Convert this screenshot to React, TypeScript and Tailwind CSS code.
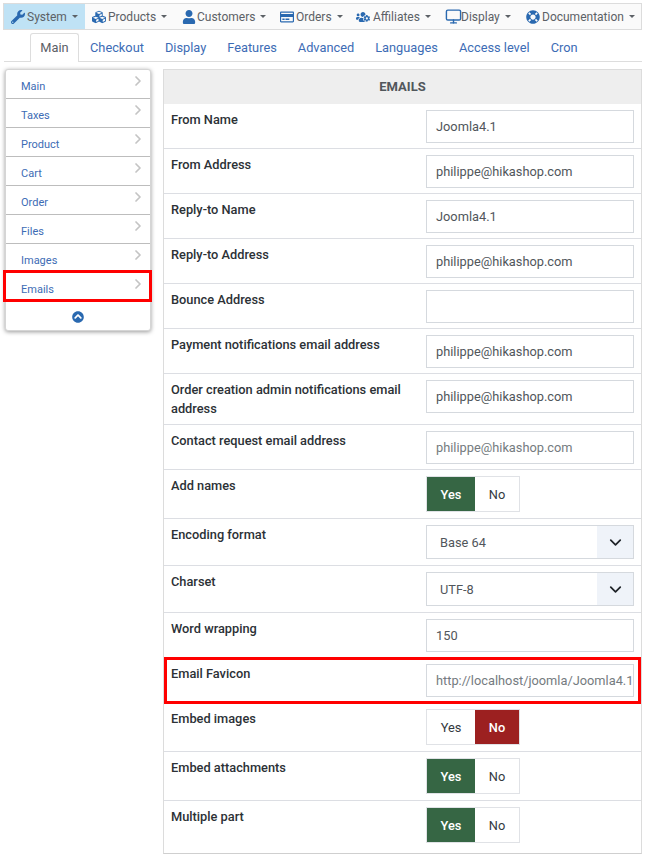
import React from 'react';
import { FaWrench, FaCubes, FaUser, FaRegCreditCard, FaUsersCog, FaLifeRing, FaChevronCircleUp } from 'react-icons/fa';
import { FiMonitor } from 'react-icons/fi';
import { LuChevronRight, LuChevronDown } from 'react-icons/lu';

const menu = [
  { label: 'System', icon: FaWrench, width: 'w-[81px]', active: true },
  { label: 'Products', icon: FaCubes, width: 'w-[90px]' },
  { label: 'Customers', icon: FaUser, width: 'w-[98px]', iconBox: 'w-[15px]' },
  { label: 'Orders', icon: FaRegCreditCard, width: 'w-[76px]' },
  { label: 'Affiliates', icon: FaUsersCog, width: 'w-[89px]', iconBox: 'w-[17px]' },
  { label: 'Display', icon: FiMonitor, width: 'w-[81px]' },
  { label: 'Documentation', icon: FaLifeRing, width: 'flex-1' },
];

const tabs = ['Main', 'Checkout', 'Display', 'Features', 'Advanced', 'Languages', 'Access level', 'Cron'];
const sideItems = ['Main', 'Taxes', 'Product', 'Cart', 'Order', 'Files', 'Images', 'Emails'];

const TextInput = ({ value, muted }: { value: string; muted?: boolean }) => (
  <div className={`h-[33px] w-[208px] border border-[#d5d9de] bg-white pl-[9px] flex items-center text-[12.8px] overflow-hidden whitespace-nowrap ${muted ? 'text-[#757b80]' : 'text-[#51565b]'}`}>
    {value}
  </div>
);

const SelectInput = ({ value }: { value: string }) => (
  <div className="h-[34px] w-[208px] border border-[#d5d9de] bg-white flex items-center text-[12.8px] text-[#51565b]">
    <span className="flex-1 pl-[13px] pt-[1px]">{value}</span>
    <span className="w-[36px] h-full bg-[#eff3f9] flex items-center justify-center text-[#1f2328]">
      <LuChevronDown size={19} strokeWidth={2.2} />
    </span>
  </div>
);

const YesNo = ({ on }: { on: boolean }) => (
  <div className="h-[36px] w-[94px] border border-[#e0e2e6] bg-white flex text-[12.8px]">
    <span className={`w-[48px] flex items-center justify-center pt-[1px] ${on ? 'bg-[#366644] text-white font-medium' : 'text-[#34393e]'}`}>Yes</span>
    <span className={`flex-1 flex items-center justify-center pt-[1px] ${on ? 'text-[#34393e]' : 'bg-[#9c2020] text-white font-medium'}`}>No</span>
  </div>
);

const Row = ({
  label,
  height,
  children,
  pad = 'pt-[6px]',
  labelPad = 'pt-[6px]',
  last,
}: {
  label: string;
  height: string;
  children: React.ReactNode;
  pad?: string;
  labelPad?: string;
  last?: boolean;
}) => (
  <div className={`flex ${height} ${last ? '' : 'border-b border-[#dcdee3]'}`}>
    <div className={`w-[262px] pl-[7px] pr-[10px] text-[12.8px] leading-[19px] font-medium text-[#2c3136] ${labelPad}`}>{label}</div>
    <div className={pad}>{children}</div>
  </div>
);

export default function App() {
  return (
    <div className="w-[645px] h-[858px] bg-white overflow-hidden font-['Roboto',sans-serif] pt-[3px]">
      {/* top menu */}
      <div className="mx-[3px] h-[27px] border border-[#dcdcdc] bg-[#fafafa] flex text-[12px] text-[#5c6166]">
        {menu.map(m => {
          const Icon = m.icon;
          return (
            <div key={m.label} className={`${m.width} flex items-center pl-[7px] whitespace-nowrap ${m.active ? 'bg-[#bfe2f5]' : ''}`}>
              <span className={`${m.iconBox ?? 'w-[16px]'} shrink-0 flex items-center`}>
                <Icon className="text-[#2a69b0] shrink-0" size={m.label === 'Display' ? 17 : 14} />
              </span>
              <span>{m.label}</span>
              <span className="ml-[5px] w-0 h-0 border-x-[3px] border-x-transparent border-t-[3px] border-t-[#5c6166]" />
            </div>
          );
        })}
      </div>

      {/* tabs */}
      <div className="mt-[3px] ml-[4px] mr-[3px] h-[29px] border-b border-[#dddddd] flex pl-[26px] text-[12.8px] text-[#3d6cb5]">
        {tabs.map((t, i) => (
          <div
            key={t}
            className={`h-[29px] flex items-center whitespace-nowrap ${i === 0 ? 'w-[49px] justify-center border border-b-0 border-[#dddddd] rounded-t-[3px] bg-white text-[#5b6066] mr-[11px]' : 'mr-[21px]'}`}
          >
            {t}
          </div>
        ))}
      </div>

      <div className="flex mt-[7px] items-start">
        {/* side nav */}
        <div className="ml-[5px] w-[146px] bg-white rounded-[3px] border border-[#d5d5d5] shadow-[0_1px_4px_rgba(0,0,0,0.4)] text-[11px] text-[#3d6cb5]">
          {sideItems.map(s => (
            <div key={s} className="relative h-[29px] border-b border-[#bdbdbd] pl-[15px] flex items-center pt-[7px]">
              {s}
              <LuChevronRight className="absolute right-[4px] top-[3px] text-[#c4c4c4]" size={16} strokeWidth={2.6} />
            </div>
          ))}
          <div className="h-[28px] flex items-center justify-center pt-[2px]">
            <FaChevronCircleUp className="text-[#2a69b0]" size={12} />
          </div>
        </div>

        {/* main panel */}
        <div className="ml-[12px] w-[479px] border border-[#dcdcdc] border-b-[#cfcfcf] relative">
          <div className="h-[34px] bg-[#eeeeee] flex items-center justify-center text-[13px] font-bold text-[#51565b]">EMAILS</div>
          <Row label="From Name" height="h-[45px]"><TextInput value="Joomla4.1" /></Row>
          <Row label="From Address" height="h-[45px]"><TextInput value="philippe@hikashop.com" /></Row>
          <Row label="Reply-to Name" height="h-[45px]"><TextInput value="Joomla4.1" /></Row>
          <Row label="Reply-to Address" height="h-[45px]"><TextInput value="philippe@hikashop.com" /></Row>
          <Row label="Bounce Address" height="h-[45px]"><TextInput value="" /></Row>
          <Row label="Payment notifications email address" height="h-[45px]"><TextInput value="philippe@hikashop.com" /></Row>
          <Row label="Order creation admin notifications email address" height="h-[51px]"><TextInput value="philippe@hikashop.com" /></Row>
          <Row label="Contact request email address" height="h-[45px]"><TextInput value="philippe@hikashop.com" muted /></Row>
          <Row label="Add names" height="h-[49px]"><YesNo on /></Row>
          <Row label="Encoding format" height="h-[47px]"><SelectInput value="Base 64" /></Row>
          <Row label="Charset" height="h-[47px]"><SelectInput value="UTF-8" /></Row>
          <Row label="Word wrapping" height="h-[45px]"><TextInput value="150" /></Row>
          <Row label="Email Favicon" height="h-[46px]"><TextInput value="http://localhost/joomla/Joomla4.1" muted /></Row>
          <Row label="Embed images" height="h-[48px]" pad="pt-[5px]" labelPad="pt-[5px]"><YesNo on={false} /></Row>
          <Row label="Embed attachments" height="h-[49px]"><YesNo on /></Row>
          <Row label="Multiple part" height="h-[52px]" last><YesNo on /></Row>
          {/* red highlight over the favicon row */}
          <div className="absolute left-0 right-0 top-[587px] h-[47px] border-[3px] border-[#ff0000] pointer-events-none" />
        </div>
      </div>

      {/* red highlight over the Emails nav item */}
      <div className="absolute left-[3px] top-[270px] w-[149px] h-[32px] border-[3px] border-[#ff0000] pointer-events-none" />
    </div>
  );
}
